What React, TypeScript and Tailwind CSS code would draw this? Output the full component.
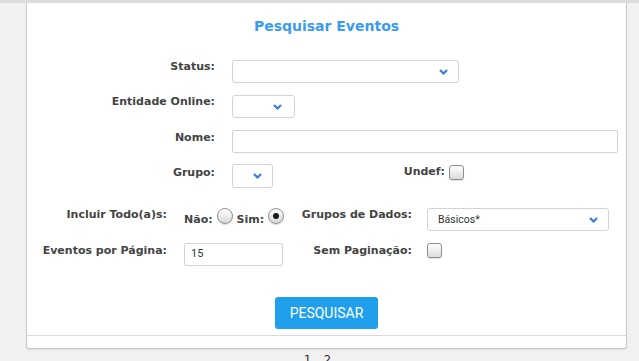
import React from "react";

const lbl = "font-['DejaVu_Sans',sans-serif] font-bold text-[11px] leading-[13px] text-[#444444] whitespace-nowrap";

function Chevron() {
  return (
    <svg width="9" height="6" viewBox="0 0 9 6" className="block">
      <path d="M1 1l3.5 3.5L8 1" fill="none" stroke="#3b7ddd" strokeWidth="2.2" />
    </svg>
  );
}

function Select({ w, h = 23, pr = 10, text }: { w: number; h?: number; pr?: number; text?: string }) {
  return (
    <div
      className="flex items-center justify-between rounded-[3px] border border-[#d3d3d3] bg-white"
      style={{ width: w, height: h, paddingRight: pr }}
    >
      <span className="pl-[10px] font-['Roboto',sans-serif] text-[10.5px] text-[#333333]">{text}</span>
      <Chevron />
    </div>
  );
}

function Radio({ checked }: { checked?: boolean }) {
  return (
    <div className="flex h-[16px] w-[16px] items-center justify-center rounded-full border border-[#8f8f8f] bg-gradient-to-b from-[#ffffff] to-[#d9d9d9] shadow-[0_1px_1px_rgba(0,0,0,0.15)]">
      {checked && <div className="h-[6px] w-[6px] rounded-full bg-[#1a1a1a]" />}
    </div>
  );
}

function Checkbox() {
  return (
    <div className="h-[15px] w-[15px] rounded-[3px] border border-[#8f8f8f] bg-gradient-to-b from-[#ffffff] to-[#dcdcdc] shadow-[0_1px_1px_rgba(0,0,0,0.12)]" />
  );
}

export default function App() {
  return (
    <div className="h-[361px] w-[639px] overflow-hidden bg-[#f1f1f1]">
      <div className="h-[3px] bg-[#dcdcdc]" />
      <div className="ml-[26px] w-[601px]">
        <div className="h-[333px] border-x border-b border-x-[#c8c8c8] border-b-[#dadada] bg-white">
          <div className="pt-[15px] text-center font-['DejaVu_Sans',sans-serif] text-[14px] font-bold leading-[17px] text-[#3a9bf5]">
            Pesquisar Eventos
          </div>

          {/* Status */}
          <div className="mt-[25px] flex items-start">
            <div className={`w-[188px] text-right ${lbl}`}>Status:</div>
            <div className="ml-[17px]">
              <Select w={227} />
            </div>
          </div>

          {/* Entidade Online */}
          <div className="mt-[12px] flex items-start">
            <div className={`w-[188px] text-right ${lbl}`}>Entidade Online:</div>
            <div className="ml-[17px]">
              <Select w={63} pr={12} />
            </div>
          </div>

          {/* Nome */}
          <div className="mt-[12px] flex items-start">
            <div className={`w-[188px] pt-[1px] text-right ${lbl}`}>Nome:</div>
            <div className="ml-[17px] h-[23px] w-[386px] rounded-[2px] border border-[#d3d3d3] bg-white" />
          </div>

          {/* Grupo / Undef */}
          <div className="mt-[11px] flex items-start">
            <div className={`w-[188px] pt-[2px] text-right ${lbl}`}>Grupo:</div>
            <div className="ml-[17px]">
              <Select w={41} h={24} />
            </div>
            <div className={`w-[172px] pt-[1px] text-right ${lbl}`}>Undef:</div>
            <div className="ml-[4px] mt-[1px]">
              <Checkbox />
            </div>
          </div>

          {/* Incluir / Grupos de Dados */}
          <div className="mt-[20px] flex items-start">
            <div className={`w-[140px] text-right ${lbl}`}>Incluir Todo(a)s:</div>
            <div className="ml-[17px] flex w-[100px] items-start">
              <span className={`mt-[5px] ${lbl}`}>Não:</span>
              <div className="ml-[4px]">
                <Radio />
              </div>
              <span className={`ml-[4px] mt-[5px] ${lbl}`}>Sim:</span>
              <div className="ml-[4px]">
                <Radio checked />
              </div>
            </div>
            <div className={`w-[128px] text-right ${lbl}`}>Grupos de Dados:</div>
            <div className="ml-[15px]">
              <Select w={182} text="Básicos*" />
            </div>
          </div>

          {/* Eventos por Página / Sem Paginação */}
          <div className="mt-[12px] flex items-start">
            <div className={`w-[140px] pt-[1px] text-right ${lbl}`}>Eventos por Página:</div>
            <div className="ml-[17px] w-[100px]">
              <div className="flex h-[23px] w-[99px] items-center rounded-[2px] border border-[#d3d3d3] bg-white pl-[6px] font-['Roboto',sans-serif] text-[11px] text-[#333333]">
                15
              </div>
            </div>
            <div className={`w-[128px] pt-[1px] text-right ${lbl}`}>Sem Paginação:</div>
            <div className="ml-[15px]">
              <Checkbox />
            </div>
          </div>

          <div className="mt-[31px] flex justify-center">
            <button className="flex h-[32px] w-[103px] items-center justify-center rounded-[3px] bg-[#1f9fec] font-['Roboto',sans-serif] text-[14px] text-white">
              PESQUISAR
            </button>
          </div>
        </div>
        <div className="h-[13px] rounded-b-[3px] border-x border-b border-[#c8c8c8] bg-[#fdfdfd] shadow-[0_1px_1px_rgba(0,0,0,0.08)]" />
      </div>
      <div className="mt-[4px] flex justify-center gap-[12px] pr-[4px] font-['DejaVu_Sans',sans-serif] text-[12px] leading-[14px] text-[#333333]">
        <span>1</span>
        <span>2</span>
      </div>
    </div>
  );
}
